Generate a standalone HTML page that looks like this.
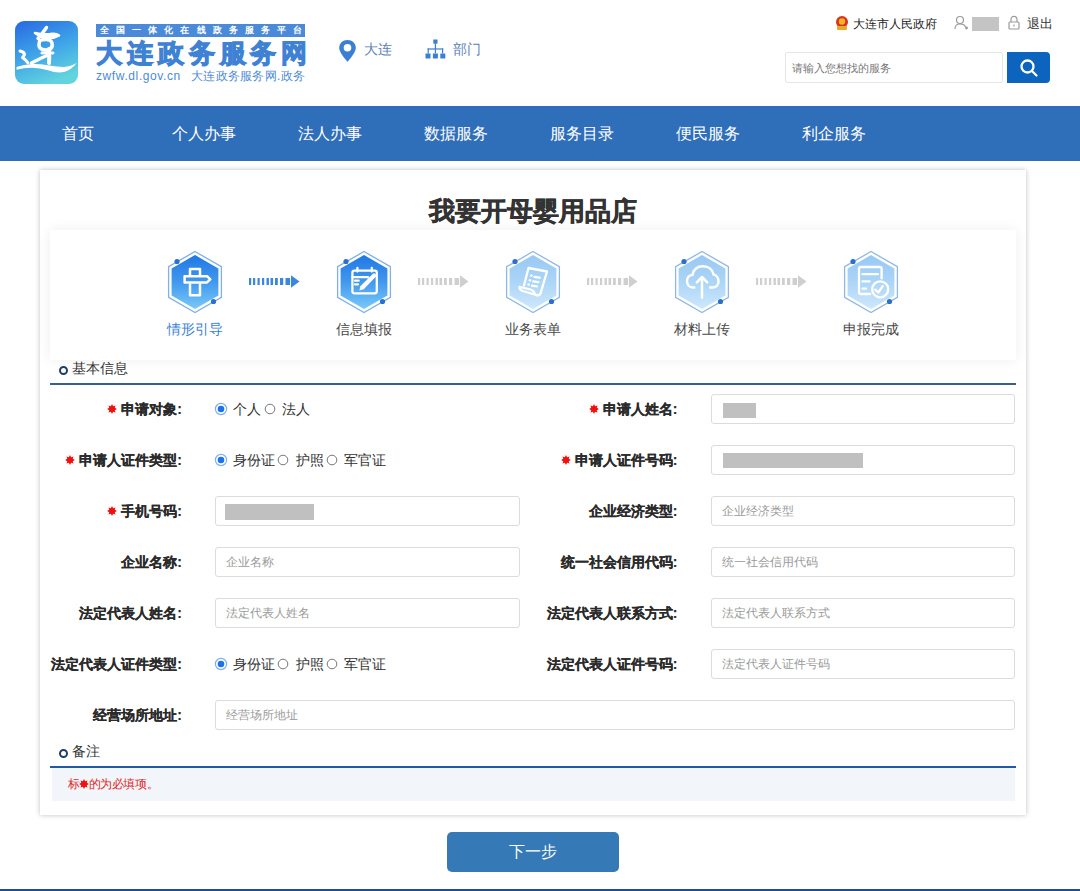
<!DOCTYPE html>
<html><head><meta charset="utf-8">
<style>
*{margin:0;padding:0;box-sizing:border-box}
html,body{width:1080px;height:891px;overflow:hidden;background:#fff;font-family:"Liberation Sans",sans-serif;color:#333}
.a{position:absolute}
.nw{white-space:nowrap}
/* header */
#hdr{position:absolute;left:0;top:0;width:1080px;height:106px;background:#fff}
#nav{position:absolute;left:0;top:106px;width:1080px;height:55px;background:#2f6eb9}
#nav span{position:absolute;top:17px;font-size:16px;line-height:22px;color:#fff;white-space:nowrap}
#card{position:absolute;left:40px;top:170px;width:986px;height:645px;background:#fff;box-shadow:0 0 5px rgba(0,0,0,0.25)}
#title{position:absolute;left:0;width:986px;top:23px;text-align:center;font-size:26px;line-height:36px;font-weight:bold;color:#333;-webkit-text-stroke:0.5px #333}
#steps{position:absolute;left:10px;top:60px;width:966px;height:130px;background:#fff;box-shadow:0 0 12px rgba(0,0,0,0.07)}
.lbl{position:absolute;font-size:14px;line-height:20px;color:#333;white-space:nowrap}
.sec{position:absolute;left:10px;width:966px;height:2px;background:#365f94}
.sech{position:absolute;font-size:14px;line-height:20px;color:#333;white-space:nowrap}
.dot{position:absolute;width:9px;height:9px;border-radius:50%;border:2.5px solid #1f3d6a;background:#fff}
.fl{position:absolute;font-size:14px;line-height:20px;font-weight:bold;color:#2a2a2a;-webkit-text-stroke:0.15px #2a2a2a;white-space:nowrap;text-align:right}
.req{color:#e60000;font-weight:bold;margin-right:4px}
.inp{position:absolute;height:30px;border:1px solid #dcdcdc;border-radius:3px;background:#fff}
.ph{position:absolute;left:10px;top:5.5px;font-size:12px;line-height:16px;color:#9a9a9a;white-space:nowrap}
.blk{position:absolute;background:#c0c0c0}
.rad{position:absolute;font-size:14px;line-height:20px;color:#333;white-space:nowrap}
</style></head><body>
<div id="hdr">
  <!-- logo -->
  <svg class="a" style="left:15px;top:21px" width="63" height="63" viewBox="0 0 63 63">
    <defs><linearGradient id="lg" x1="0.15" y1="0" x2="0.55" y2="1">
      <stop offset="0" stop-color="#2a6ee2"/><stop offset="0.5" stop-color="#3ea3e8"/><stop offset="1" stop-color="#62d4de"/></linearGradient></defs>
    <rect x="0" y="0" width="63" height="63" rx="9" fill="url(#lg)"/>
    <g fill="none" stroke="#fff" stroke-linecap="round" stroke-linejoin="round">
      <path d="M31.5 6.5 Q28 12 23 17.5" stroke-width="3.4"/>
      <path d="M20 12 Q28 14 35 13 Q41 12 44 14.5 Q39 17.5 33 17 Q26 16.5 20 12" stroke-width="2.6" fill="#fff"/>
      <path d="M25 19.5 Q23 24 25 27 Q28 30 34 28.5 Q38 27 37 22 Q36 18.5 31 18.5 Q27 18.5 25 19.5" stroke-width="3.6"/>
      <path d="M27 32 Q32 31.5 38 32" stroke-width="3"/>
      <path d="M34 28 Q34.5 36 34 42" stroke-width="4"/>
      <path d="M34 33.5 Q25 37.5 16.5 42" stroke-width="3.2"/>
      <path d="M5 30 Q9.5 31 9.5 33.5 Q8.5 35.5 7.5 36.5 Q11 39 13 42" stroke-width="3"/>
    </g>
    <path fill="#fff" d="M1.5 46 Q9 43.3 17 43 Q25 42.8 33 44.3 Q42 46 49 46 Q56 45.5 61.5 42 Q57 48.5 49 51 Q42 52.5 33 49.3 Q25 46.8 17 46.8 Q9 47 1.5 48.8 Z"/>
  </svg>
  <div class="a" style="left:96px;top:24px;width:209px;height:13px;background:#4a8ad8"></div>
  <div class="a nw" style="left:100px;top:24px;font-size:9px;line-height:13px;color:#fff;font-weight:bold;letter-spacing:7.1px">全国一体化在线政务服务平台</div>
  <div class="a nw" style="left:96px;top:35px;font-size:26px;line-height:36px;color:#3f82d4;font-weight:bold;letter-spacing:4.9px;-webkit-text-stroke:1.1px #3f82d4">大连政务服务网</div>
  <div class="a nw" style="left:96px;top:68px;font-size:12px;line-height:16px;color:#4d8ad6;letter-spacing:0.6px">zwfw.dl.gov.cn</div><div class="a nw" style="left:191px;top:68px;font-size:12px;line-height:16px;color:#4d8ad6;letter-spacing:0.3px">大连政务服务网.政务</div>
  <!-- location -->
  <svg class="a" style="left:338px;top:39px" width="19" height="24" viewBox="0 0 19 24">
    <path d="M9.5 1 C4.6 1 1.2 4.5 1.2 9 C1.2 14 9.5 22.8 9.5 22.8 C9.5 22.8 17.8 14 17.8 9 C17.8 4.5 14.4 1 9.5 1 Z" fill="#3a7fd5"/>
    <circle cx="9.5" cy="8.8" r="3.8" fill="#fff"/>
  </svg>
  <div class="a nw" style="left:364px;top:39px;font-size:14px;line-height:20px;color:#5a7fb8">大连</div>
  <!-- dept -->
  <svg class="a" style="left:425px;top:39px" width="21" height="21" viewBox="0 0 21 21" fill="#3a7fd5">
    <rect x="8.3" y="0.5" width="4.2" height="4.2"/>
    <rect x="9.8" y="4.5" width="1.2" height="5.5"/>
    <rect x="2.6" y="9.4" width="15.6" height="1.2"/>
    <rect x="2.6" y="9.4" width="1.2" height="5"/><rect x="17" y="9.4" width="1.2" height="5"/><rect x="9.8" y="9.4" width="1.2" height="5"/>
    <rect x="0.5" y="14.5" width="5" height="5"/><rect x="7.9" y="14.5" width="5" height="5"/><rect x="15.3" y="14.5" width="5" height="5"/>
  </svg>
  <div class="a nw" style="left:453px;top:39px;font-size:14px;line-height:20px;color:#5a7fb8">部门</div>
  <!-- top right -->
  <svg class="a" style="left:835px;top:15px" width="14" height="16" viewBox="0 0 14 16">
    <circle cx="7" cy="7" r="6" fill="#d9321f"/><circle cx="7" cy="6.5" r="3.2" fill="#f2b324"/>
    <rect x="2" y="11" width="10" height="4" rx="1" fill="#e8a92a"/>
  </svg>
  <div class="a nw" style="left:853px;top:15px;font-size:12px;line-height:18px;color:#222">大连市人民政府</div>
  <svg class="a" style="left:954px;top:15px" width="14" height="15" viewBox="0 0 14 15" fill="none" stroke="#9a9a9a" stroke-width="1.2">
    <circle cx="6" cy="5" r="3.5"/><path d="M1 14 C1 10 3 9 6 9 C9 9 11 10 11.5 12"/><circle cx="12.5" cy="13" r="0.8" fill="#9a9a9a"/>
  </svg>
  <div class="blk" style="left:972px;top:17px;width:27px;height:14px;background:#c4c4c4"></div>
  <svg class="a" style="left:1007px;top:15px" width="14" height="15" viewBox="0 0 14 15" fill="none" stroke="#9a9a9a" stroke-width="1.2">
    <path d="M4 7 V4.5 C4 2.5 5.3 1.3 7 1.3 C8.7 1.3 10 2.5 10 4.5 V7"/><rect x="2" y="7" width="10" height="7" rx="1"/><path d="M7 9.5 V11.5"/>
  </svg>
  <div class="a nw" style="left:1027px;top:15px;font-size:12.5px;line-height:18px;color:#333">退出</div>
  <!-- search -->
  <div class="a" style="left:785px;top:52px;width:218px;height:31px;border:1px solid #e6e6e6;background:#fff;border-radius:2px"></div>
  <div class="a nw" style="left:792px;top:60px;font-size:11px;line-height:16px;color:#777">请输入您想找的服务</div>
  <div class="a" style="left:1007px;top:52px;width:43px;height:31px;background:#0d64bf;border-radius:0 4px 4px 0"></div>
  <svg class="a" style="left:1018px;top:57px" width="22" height="22" viewBox="0 0 22 22" fill="none" stroke="#fff" stroke-width="2.3" stroke-linecap="round">
    <circle cx="9.5" cy="9.5" r="6"/><path d="M14 14 L18.5 18.5"/>
  </svg>
</div>
<div id="nav">
  <span style="left:62px">首页</span>
  <span style="left:172px">个人办事</span>
  <span style="left:298px">法人办事</span>
  <span style="left:424px">数据服务</span>
  <span style="left:550px">服务目录</span>
  <span style="left:676px">便民服务</span>
  <span style="left:802px">利企服务</span>
</div>
<div id="card">
  <div id="title">我要开母婴用品店</div>
  <div id="steps"></div>
  <svg class="a" style="left:120.0px;top:76.5px" width="70" height="70" viewBox="-35.0 -35.0 70 70">
<defs><linearGradient id="hg0" x1="0" y1="0" x2="0" y2="1"><stop offset="0" stop-color="#1f77e4"/><stop offset="0.5" stop-color="#4298ee"/><stop offset="1" stop-color="#78c9f8"/></linearGradient></defs>
<polygon points="0,-30.5 26.4,-15.25 26.4,15.25 0,30.5 -26.4,15.25 -26.4,-15.25" fill="none" stroke="#7fb0ea" stroke-width="1.3"/>
<polygon points="0,-27 23.4,-13.5 23.4,13.5 0,27 -23.4,13.5 -23.4,-13.5" fill="url(#hg0)"/>
<circle cx="-18" cy="-20.5" r="2.6" fill="#2a6fcf"/>
<circle cx="18.5" cy="19.5" r="2.6" fill="#2a6fcf"/>
<g fill="none" stroke="#fff" stroke-width="2.5" stroke-linejoin="round">
<path d="M-5 -7 V-13 H5 V-7"/>
<path d="M-10.4 -5.8 H12 L15.3 -2.7 L12 0.4 H-10.4 Z"/>
<path d="M-5 1.6 V13.3 H5 V1.6"/>
</g>
</svg>
<div class="lbl" style="left:115px;top:149px;width:80px;text-align:center;color:#3a82d6">情形引导</div>
<svg class="a" style="left:289.0px;top:76.5px" width="70" height="70" viewBox="-35.0 -35.0 70 70">
<defs><linearGradient id="hg1" x1="0" y1="0" x2="0" y2="1"><stop offset="0" stop-color="#1f77e4"/><stop offset="0.5" stop-color="#4298ee"/><stop offset="1" stop-color="#78c9f8"/></linearGradient></defs>
<polygon points="0,-30.5 26.4,-15.25 26.4,15.25 0,30.5 -26.4,15.25 -26.4,-15.25" fill="none" stroke="#7fb0ea" stroke-width="1.3"/>
<polygon points="0,-27 23.4,-13.5 23.4,13.5 0,27 -23.4,13.5 -23.4,-13.5" fill="url(#hg1)"/>
<circle cx="-18" cy="-20.5" r="2.6" fill="#2a6fcf"/>
<circle cx="18.5" cy="19.5" r="2.6" fill="#2a6fcf"/>
<g fill="none" stroke="#fff" stroke-width="2.3" stroke-linejoin="round" stroke-linecap="round">
<path d="M3 11.3 H-9.6 Q-11.6 11.3 -11.6 9.3 V-9.3 Q-11.6 -11.3 -9.6 -11.3 H10.8 Q12.8 -11.3 12.8 -9.3 V9.3 Q12.8 11.3 10.8 11.3 H3"/>
<path d="M-6.6 -14 V-10.5 M7.8 -14 V-10.5"/>
<path d="M-11.6 -4.9 H4"/>
<path d="M-9 -1.3 H-5.3 M-9 2.3 H-6"/>
</g>
<path d="M-4.6 8.6 L-3.6 4.2 L8.6 -8 Q10.2 -9.4 11.6 -8 Q13 -6.6 11.6 -5 L-0.3 7.3 Z" fill="#fff"/>
</svg>
<div class="lbl" style="left:284px;top:149px;width:80px;text-align:center;color:#4a4a4a">信息填报</div>
<svg class="a" style="left:458.0px;top:76.5px" width="70" height="70" viewBox="-35.0 -35.0 70 70">
<defs><linearGradient id="hg2" x1="0" y1="0" x2="0" y2="1"><stop offset="0" stop-color="#98c8f3"/><stop offset="0.5" stop-color="#acd5f7"/><stop offset="1" stop-color="#cde8fb"/></linearGradient></defs>
<polygon points="0,-30.5 26.4,-15.25 26.4,15.25 0,30.5 -26.4,15.25 -26.4,-15.25" fill="none" stroke="#8fb8e6" stroke-width="1.3"/>
<polygon points="0,-27 23.4,-13.5 23.4,13.5 0,27 -23.4,13.5 -23.4,-13.5" fill="url(#hg2)"/>
<circle cx="-18" cy="-20.5" r="2.6" fill="#2a6fcf"/>
<circle cx="18.5" cy="19.5" r="2.6" fill="#2a6fcf"/>
<g fill="none" stroke="#fff" stroke-width="2.3" stroke-linejoin="round" stroke-linecap="round">
<path d="M-9 3.5 L-4.5 -14 L14 -10.5 L7.5 11.5 Q6.5 14 4 13.2"/>
<path d="M4 13.2 L-10.5 9 Q-14 7.5 -13.5 4.8 L-2.5 7.5 Q1 8.5 1.5 11.5"/>
<path d="M1.5 -5.2 L6.7 -4.3 M0.3 -0.6 L5.3 0.2 M-1 3.6 L3.8 4.3"/>
</g>
<g fill="#fff"><circle cx="-1.6" cy="-6.4" r="1.3"/><circle cx="-3" cy="-1.8" r="1.3"/><circle cx="-4.4" cy="2.5" r="1.3"/></g>
</svg>
<div class="lbl" style="left:453px;top:149px;width:80px;text-align:center;color:#4a4a4a">业务表单</div>
<svg class="a" style="left:627.0px;top:76.5px" width="70" height="70" viewBox="-35.0 -35.0 70 70">
<defs><linearGradient id="hg3" x1="0" y1="0" x2="0" y2="1"><stop offset="0" stop-color="#98c8f3"/><stop offset="0.5" stop-color="#acd5f7"/><stop offset="1" stop-color="#cde8fb"/></linearGradient></defs>
<polygon points="0,-30.5 26.4,-15.25 26.4,15.25 0,30.5 -26.4,15.25 -26.4,-15.25" fill="none" stroke="#8fb8e6" stroke-width="1.3"/>
<polygon points="0,-27 23.4,-13.5 23.4,13.5 0,27 -23.4,13.5 -23.4,-13.5" fill="url(#hg3)"/>
<circle cx="-18" cy="-20.5" r="2.6" fill="#2a6fcf"/>
<circle cx="18.5" cy="19.5" r="2.6" fill="#2a6fcf"/>
<g fill="none" stroke="#fff" stroke-width="2.5" stroke-linejoin="round" stroke-linecap="round">
<path d="M-7.7 5.5 H-9 C-13 5.5 -15 2.5 -15 -1 C-15 -4.5 -12.5 -7 -9.5 -7 C-8.5 -12.5 -4.5 -15.8 1 -15.8 C6.5 -15.8 10.5 -12.5 11.5 -7.5 C14.5 -7 16.5 -4 16.5 -0.5 C16.5 3 14 5.5 10.5 5.5 H8.1"/>
<path d="M0 15.5 V-4.5 M-5.2 0.3 L0 -5 L5.2 0.3"/>
</g>
</svg>
<div class="lbl" style="left:622px;top:149px;width:80px;text-align:center;color:#4a4a4a">材料上传</div>
<svg class="a" style="left:796.0px;top:76.5px" width="70" height="70" viewBox="-35.0 -35.0 70 70">
<defs><linearGradient id="hg4" x1="0" y1="0" x2="0" y2="1"><stop offset="0" stop-color="#98c8f3"/><stop offset="0.5" stop-color="#acd5f7"/><stop offset="1" stop-color="#cde8fb"/></linearGradient></defs>
<polygon points="0,-30.5 26.4,-15.25 26.4,15.25 0,30.5 -26.4,15.25 -26.4,-15.25" fill="none" stroke="#8fb8e6" stroke-width="1.3"/>
<polygon points="0,-27 23.4,-13.5 23.4,13.5 0,27 -23.4,13.5 -23.4,-13.5" fill="url(#hg4)"/>
<circle cx="-18" cy="-20.5" r="2.6" fill="#2a6fcf"/>
<circle cx="18.5" cy="19.5" r="2.6" fill="#2a6fcf"/>
<g fill="none" stroke="#fff" stroke-width="2.3" stroke-linejoin="round" stroke-linecap="round">
<path d="M10.6 -3.6 V-13.5 Q10.6 -15 8.6 -15 H-10 Q-12 -15 -12 -13 V10 Q-12 12 -10 12 H-0.8"/>
<path d="M-8.5 -7.8 H7 M-8.5 -0.6 H-1.5 M-8.5 6.6 H-4.8"/>
<circle cx="9.2" cy="7.3" r="8"/>
<path d="M4.3 7.6 L7.2 10.5 L11.7 4.2"/>
</g>
</svg>
<div class="lbl" style="left:791px;top:149px;width:80px;text-align:center;color:#4a4a4a">申报完成</div>
<svg class="a" style="left:209px;top:105px" width="52" height="14" fill="#3b86e0"><rect x="0" y="3" width="2.2" height="7"/><rect x="4" y="3" width="2.2" height="7"/><rect x="8.5" y="3" width="2.2" height="7"/><rect x="13" y="3" width="2.2" height="7"/><rect x="17.5" y="3" width="2.4" height="7"/><rect x="21.5" y="3" width="2.6" height="7"/><rect x="26" y="3" width="2.8" height="7"/><rect x="31" y="3" width="3.2" height="7"/><rect x="36.5" y="3" width="4.6" height="7"/><polygon points="42,0.2 50.5,6.5 42,12.8"/></svg>
<svg class="a" style="left:378px;top:105px" width="52" height="14" fill="#cfcfcf"><rect x="0" y="3" width="2.2" height="7"/><rect x="4" y="3" width="2.2" height="7"/><rect x="8.5" y="3" width="2.2" height="7"/><rect x="13" y="3" width="2.2" height="7"/><rect x="17.5" y="3" width="2.4" height="7"/><rect x="21.5" y="3" width="2.6" height="7"/><rect x="26" y="3" width="2.8" height="7"/><rect x="31" y="3" width="3.2" height="7"/><rect x="36.5" y="3" width="4.6" height="7"/><polygon points="42,0.2 50.5,6.5 42,12.8"/></svg>
<svg class="a" style="left:547px;top:105px" width="52" height="14" fill="#cfcfcf"><rect x="0" y="3" width="2.2" height="7"/><rect x="4" y="3" width="2.2" height="7"/><rect x="8.5" y="3" width="2.2" height="7"/><rect x="13" y="3" width="2.2" height="7"/><rect x="17.5" y="3" width="2.4" height="7"/><rect x="21.5" y="3" width="2.6" height="7"/><rect x="26" y="3" width="2.8" height="7"/><rect x="31" y="3" width="3.2" height="7"/><rect x="36.5" y="3" width="4.6" height="7"/><polygon points="42,0.2 50.5,6.5 42,12.8"/></svg>
<svg class="a" style="left:716px;top:105px" width="52" height="14" fill="#cfcfcf"><rect x="0" y="3" width="2.2" height="7"/><rect x="4" y="3" width="2.2" height="7"/><rect x="8.5" y="3" width="2.2" height="7"/><rect x="13" y="3" width="2.2" height="7"/><rect x="17.5" y="3" width="2.4" height="7"/><rect x="21.5" y="3" width="2.6" height="7"/><rect x="26" y="3" width="2.8" height="7"/><rect x="31" y="3" width="3.2" height="7"/><rect x="36.5" y="3" width="4.6" height="7"/><polygon points="42,0.2 50.5,6.5 42,12.8"/></svg>
  <div class="dot" style="left:19px;top:195.7px"></div>
<div class="sech" style="left:32px;top:188px">基本信息</div>
<div class="sec" style="top:213px"></div>
<div class="fl" style="left:-158px;width:300px;top:229px"><svg width="10" height="10" viewBox="0 0 10 10" style="vertical-align:0px;margin-right:4px"><polygon fill="#f01010" points="5.00,0.10 6.15,2.23 8.46,1.54 7.77,3.85 9.90,5.00 7.77,6.15 8.46,8.46 6.15,7.77 5.00,9.90 3.85,7.77 1.54,8.46 2.23,6.15 0.10,5.00 2.23,3.85 1.54,1.54 3.85,2.23"/></svg>申请对象:</div>
<svg class="a" style="left:173.5px;top:232px" width="14" height="14"><circle cx="7" cy="7" r="5.6" fill="#fff" stroke="#7fb0f0" stroke-width="1.2"/><circle cx="7" cy="7" r="3.3" fill="#1a73e8"/></svg>
<div class="rad" style="left:192.5px;top:229px">个人</div>
<svg class="a" style="left:223px;top:232px" width="14" height="14"><circle cx="7" cy="7" r="4.8" fill="#fff" stroke="#777" stroke-width="1"/></svg>
<div class="rad" style="left:241.5px;top:229px">法人</div>
<div class="fl" style="left:337.5px;width:300px;top:229px"><svg width="10" height="10" viewBox="0 0 10 10" style="vertical-align:0px;margin-right:4px"><polygon fill="#f01010" points="5.00,0.10 6.15,2.23 8.46,1.54 7.77,3.85 9.90,5.00 7.77,6.15 8.46,8.46 6.15,7.77 5.00,9.90 3.85,7.77 1.54,8.46 2.23,6.15 0.10,5.00 2.23,3.85 1.54,1.54 3.85,2.23"/></svg>申请人姓名:</div>
<div class="inp" style="left:671px;top:224px;width:304px"><div class="blk" style="left:11px;top:8px;width:33px;height:15px"></div></div>
<div class="fl" style="left:-158px;width:300px;top:280px"><svg width="10" height="10" viewBox="0 0 10 10" style="vertical-align:0px;margin-right:4px"><polygon fill="#f01010" points="5.00,0.10 6.15,2.23 8.46,1.54 7.77,3.85 9.90,5.00 7.77,6.15 8.46,8.46 6.15,7.77 5.00,9.90 3.85,7.77 1.54,8.46 2.23,6.15 0.10,5.00 2.23,3.85 1.54,1.54 3.85,2.23"/></svg>申请人证件类型:</div>
<svg class="a" style="left:173.5px;top:283px" width="14" height="14"><circle cx="7" cy="7" r="5.6" fill="#fff" stroke="#7fb0f0" stroke-width="1.2"/><circle cx="7" cy="7" r="3.3" fill="#1a73e8"/></svg>
<div class="rad" style="left:192.5px;top:280px">身份证</div>
<svg class="a" style="left:236.3px;top:283px" width="14" height="14"><circle cx="7" cy="7" r="4.8" fill="#fff" stroke="#777" stroke-width="1"/></svg>
<div class="rad" style="left:255.5px;top:280px">护照</div>
<svg class="a" style="left:284.7px;top:283px" width="14" height="14"><circle cx="7" cy="7" r="4.8" fill="#fff" stroke="#777" stroke-width="1"/></svg>
<div class="rad" style="left:304px;top:280px">军官证</div>
<div class="fl" style="left:337.5px;width:300px;top:280px"><svg width="10" height="10" viewBox="0 0 10 10" style="vertical-align:0px;margin-right:4px"><polygon fill="#f01010" points="5.00,0.10 6.15,2.23 8.46,1.54 7.77,3.85 9.90,5.00 7.77,6.15 8.46,8.46 6.15,7.77 5.00,9.90 3.85,7.77 1.54,8.46 2.23,6.15 0.10,5.00 2.23,3.85 1.54,1.54 3.85,2.23"/></svg>申请人证件号码:</div>
<div class="inp" style="left:671px;top:275px;width:304px"><div class="blk" style="left:11px;top:7px;width:140px;height:15px"></div></div>
<div class="fl" style="left:-158px;width:300px;top:331px"><svg width="10" height="10" viewBox="0 0 10 10" style="vertical-align:0px;margin-right:4px"><polygon fill="#f01010" points="5.00,0.10 6.15,2.23 8.46,1.54 7.77,3.85 9.90,5.00 7.77,6.15 8.46,8.46 6.15,7.77 5.00,9.90 3.85,7.77 1.54,8.46 2.23,6.15 0.10,5.00 2.23,3.85 1.54,1.54 3.85,2.23"/></svg>手机号码:</div>
<div class="inp" style="left:175px;top:326px;width:305px"><div class="blk" style="left:9px;top:7px;width:89px;height:16px"></div></div>
<div class="fl" style="left:337.5px;width:300px;top:331px">企业经济类型:</div>
<div class="inp" style="left:671px;top:326px;width:304px"><div class="ph">企业经济类型</div></div>
<div class="fl" style="left:-158px;width:300px;top:382px">企业名称:</div>
<div class="inp" style="left:175px;top:377px;width:305px"><div class="ph">企业名称</div></div>
<div class="fl" style="left:337.5px;width:300px;top:382px">统一社会信用代码:</div>
<div class="inp" style="left:671px;top:377px;width:304px"><div class="ph">统一社会信用代码</div></div>
<div class="fl" style="left:-158px;width:300px;top:433px">法定代表人姓名:</div>
<div class="inp" style="left:175px;top:428px;width:305px"><div class="ph">法定代表人姓名</div></div>
<div class="fl" style="left:337.5px;width:300px;top:433px">法定代表人联系方式:</div>
<div class="inp" style="left:671px;top:428px;width:304px"><div class="ph">法定代表人联系方式</div></div>
<div class="fl" style="left:-158px;width:300px;top:484px">法定代表人证件类型:</div>
<svg class="a" style="left:173.5px;top:487px" width="14" height="14"><circle cx="7" cy="7" r="5.6" fill="#fff" stroke="#7fb0f0" stroke-width="1.2"/><circle cx="7" cy="7" r="3.3" fill="#1a73e8"/></svg>
<div class="rad" style="left:192.5px;top:484px">身份证</div>
<svg class="a" style="left:236.3px;top:487px" width="14" height="14"><circle cx="7" cy="7" r="4.8" fill="#fff" stroke="#777" stroke-width="1"/></svg>
<div class="rad" style="left:255.5px;top:484px">护照</div>
<svg class="a" style="left:284.7px;top:487px" width="14" height="14"><circle cx="7" cy="7" r="4.8" fill="#fff" stroke="#777" stroke-width="1"/></svg>
<div class="rad" style="left:304px;top:484px">军官证</div>
<div class="fl" style="left:337.5px;width:300px;top:484px">法定代表人证件号码:</div>
<div class="inp" style="left:671px;top:479px;width:304px"><div class="ph">法定代表人证件号码</div></div>
<div class="fl" style="left:-158px;width:300px;top:535px">经营场所地址:</div>
<div class="inp" style="left:175px;top:530px;width:800px"><div class="ph">经营场所地址</div></div>
<div class="dot" style="left:19px;top:578.7px"></div>
<div class="sech" style="left:32px;top:571px">备注</div>
<div class="sec" style="top:596px;background:#1f5aa6"></div>
<div class="a" style="left:11.5px;top:598px;width:963.5px;height:33px;background:#f2f5fa"></div>
<div class="a nw" style="left:28px;top:606px;font-size:11.5px;line-height:16px;color:#e02828;letter-spacing:-0.4px">标<svg width="10" height="10" viewBox="0 0 10 10" style="vertical-align:-1px;margin:0 -0.3px 0 -0.8px"><polygon fill="#f01010" points="5.00,0.10 6.15,2.23 8.46,1.54 7.77,3.85 9.90,5.00 7.77,6.15 8.46,8.46 6.15,7.77 5.00,9.90 3.85,7.77 1.54,8.46 2.23,6.15 0.10,5.00 2.23,3.85 1.54,1.54 3.85,2.23"/></svg>的为必填项。</div>
</div>
<div class="a" style="left:447px;top:832px;width:172px;height:40px;background:#357ab6;border-radius:5px;color:#fff;font-size:15.5px;line-height:39px;text-align:center">下一步</div>
<div class="a" style="left:0;top:889px;width:1080px;height:2px;background:#1b4e94"></div>
</body></html>
